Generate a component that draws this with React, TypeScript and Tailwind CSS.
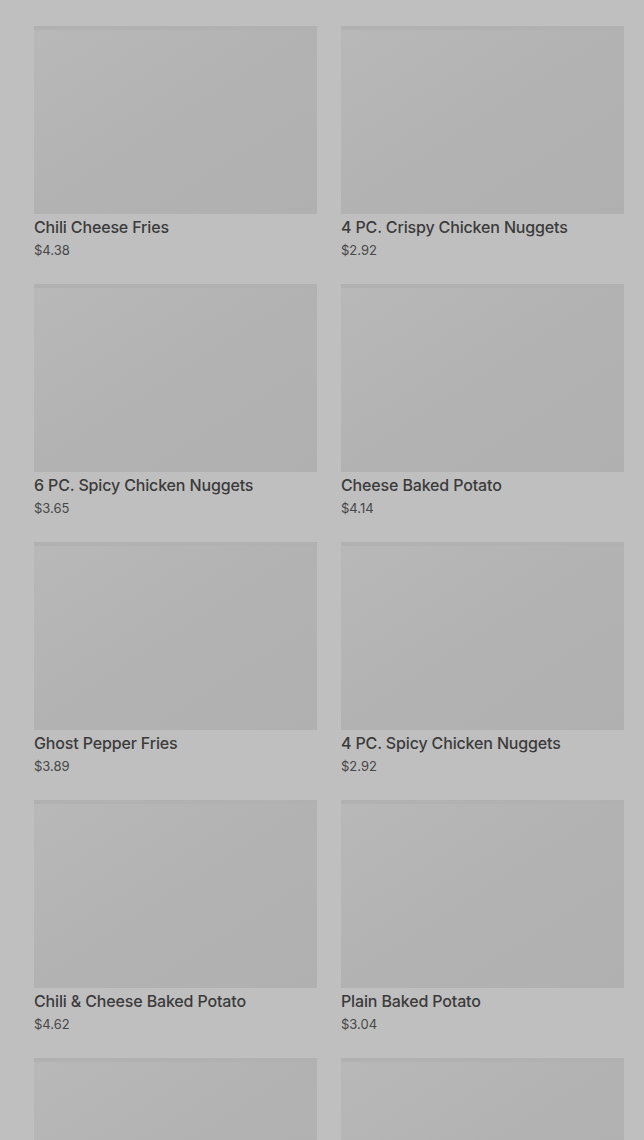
import React from "react";

const ITEMS = [
  { name: "Chili Cheese Fries", price: "$4.38" },
  { name: "4 PC. Crispy Chicken Nuggets", price: "$2.92" },
  { name: "6 PC. Spicy Chicken Nuggets", price: "$3.65" },
  { name: "Cheese Baked Potato", price: "$4.14" },
  { name: "Ghost Pepper Fries", price: "$3.89" },
  { name: "4 PC. Spicy Chicken Nuggets", price: "$2.92" },
  { name: "Chili & Cheese Baked Potato", price: "$4.62" },
  { name: "Plain Baked Potato", price: "$3.04" },
  { name: "Bacon Cheese Fries", price: "$4.71" },
  { name: "Natural-Cut Fries", price: "$2.19" },
];

function MenuCard({ name, price }: { name: string; price: string }) {
  return (
    <div className="flex flex-col">
      <div className="h-[188px] w-full bg-gradient-to-br from-[#b8b8b8] via-[#b2b2b2] to-[#b0b0b0] border-t-4 border-[#b1b1b1]" />
      <div className="h-[26px] pt-[3px] text-[16px] leading-[20px] font-medium tracking-[-0.15px] text-[#3b3b3b]">
        {name}
      </div>
      <div className="h-[20px] text-[13px] leading-[20px] text-[#474747]">{price}</div>
    </div>
  );
}

export default function App() {
  return (
    <div
      className="h-[1140px] overflow-hidden bg-[#bfbfbf] pl-[34px] pr-[20px] pt-[26px]"
      style={{ fontFamily: "Inter, Roboto, 'Noto Sans', sans-serif" }}
    >
      <div className="grid grid-cols-2 gap-x-[24px] gap-y-[24px]">
        {ITEMS.map((item) => (
          <MenuCard key={item.name} name={item.name} price={item.price} />
        ))}
      </div>
    </div>
  );
}
